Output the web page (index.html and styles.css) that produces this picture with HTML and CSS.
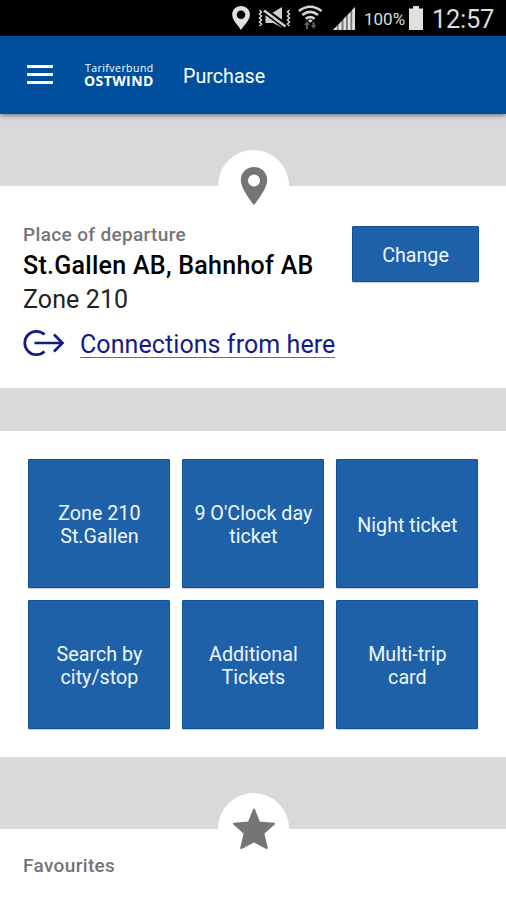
FILE: index.html
```html
<!DOCTYPE html>
<html lang="en">
<head>
<meta charset="utf-8">
<title>Purchase</title>
<link rel="stylesheet" href="styles.css">
</head>
<body>
<div class="status">
  <svg class="status-icons" width="130" height="36" viewBox="226 0 130 36">
    <path fill="#e0e0e0" fill-rule="evenodd" d="M241 6C235.800 6 232.200 9.700 232.200 14.500C232.200 20.500 238 25 241 30C244 25 249.900 20.500 249.900 14.500C249.900 9.700 246.200 6 241 6ZM241 10.500A4.300 4.300 0 1 1 241 19.100A4.300 4.300 0 1 1 241 10.500Z"/>
    <path fill="#cfcfcf" d="M265.500 12.500H273L282 7V27.500L273 23H265.500z"/>
    <path fill="none" stroke="#000" stroke-width="6" d="M263 9.500L286 26.500"/>
    <g fill="none" stroke="#cfcfcf" stroke-width="1.600">
      <path d="M259.500 10l2 2-2 2 2 2-2 2 2 2-2 2 2 2-2 2M289.500 10l-2 2 2 2-2 2 2 2-2 2 2 2-2 2 2 2"/>
      <path stroke-width="2.600" d="M264 10.500L285.500 26.500"/>
    </g>
    <g fill="none" stroke="#d4d4d4" stroke-width="2.500">
      <path d="M298.800 11Q310.300 2.500 321.500 11M302.300 15Q310.300 8.800 318 15M305.700 18.800Q310.300 15.500 314.600 18.800"/>
    </g>
    <path fill="#d4d4d4" d="M307.800 20.500q2.500-2 5 0l-2.500 2.300z"/>
    <path fill="#606060" d="M304 25l3-4 3 4h-2v4h-2v-4zM311 25h1.500v-3h2v3h2l-3 4z"/>
    <path fill="#777" d="M333 30l22-23v23z"/>
    <path fill="#e0e0e0" d="M333 30l4-4v4zM338.500 24.500l3-3V30h-3zM343.500 19.200l2.500-2.700V30h-2.500zM347.800 14.700l2.700-2.800V30h-2.700zM352.200 10l2.800-3V30h-2.800z"/>
  </svg>
  <span class="percent">100%</span>
  <svg class="battery" width="14" height="24" viewBox="0 0 14 24"><path fill="#e0e0e0" d="M4 0h6v2.500H14V24H0V2.500h4z"/></svg>
  <span class="clock">12:57</span>
</div>
<header class="appbar">
  <div class="menu"><i></i><i></i><i></i></div>
  <div class="logo"><span class="logo-top">Tarifverbund</span><span class="logo-bottom">OSTWIND</span></div>
  <h1><span>Purchase</span></h1>
</header>
<main>
  <section class="departure">
    <div class="badge">
      <svg width="28" height="40" viewBox="0 0 28 40"><path fill="#757575" fill-rule="evenodd" d="M14 0C6.500 0 .8 5.600.8 13C.8 22.500 14 38 14 38S27.200 22.500 27.200 13C27.200 5.600 21.500 0 14 0ZM14 7.500a6 6 0 1 1 0 12a6 6 0 1 1 0-12Z"/></svg>
    </div>
    <div class="place">
      <div class="label"><span class="label-place">Place of departure</span></div>
      <div class="stop"><span>St.Gallen AB, Bahnhof AB</span></div>
      <div class="zone"><span>Zone 210</span></div>
      <div class="connections">
        <svg width="42" height="28" viewBox="0 0 42 28"><path fill="none" stroke="#151a86" stroke-width="2.700" d="M21.500 5.500A11.700 11.700 0 1 0 21.500 22.500M11.500 14H39.500M31 5.500L39.500 14L31 22.500"/></svg>
        <a class="link">Connections from here</a>
      </div>
    </div>
    <button class="change"><span>Change</span></button>
  </section>
  <section class="tickets">
    <button class="tile"><span>Zone 210<br>St.Gallen</span></button>
    <button class="tile"><span>9 O'Clock day<br>ticket</span></button>
    <button class="tile"><span>Night ticket</span></button>
    <button class="tile"><span>Search by<br>city/stop</span></button>
    <button class="tile"><span>Additional<br>Tickets</span></button>
    <button class="tile"><span>Multi-trip<br>card</span></button>
  </section>
  <section class="favourites">
    <div class="badge">
      <svg class="star" width="44" height="42" viewBox="0 0 44 42"><path fill="#757575" stroke="#757575" stroke-width="2" stroke-linejoin="round" d="M22 1.500L27.200 14.500L42 15.700L31.300 25.300L34.800 40L22 33.300L9.200 40L12.700 25.300L2 15.700L16.800 14.500Z"/></svg>
    </div>
    <div class="label"><span class="label-fav">Favourites</span></div>
  </section>
</main>
</body>
</html>
```
FILE: styles.css
```css
* { box-sizing: border-box; }
body { margin: 0; height: 900px; overflow: hidden; background: #d9d9d9; font-family: Roboto, "Liberation Sans", sans-serif; }
span, a { white-space: nowrap; }
.status { height: 36px; background: #000; display: flex; align-items: center; padding-left: 226px; color: #dcdcdc; }
.status-icons { flex: none; }
.percent { width: 40px; margin-left: 8px; font-size: 17px; line-height: 36px; padding-top: 1px; }
.battery { flex: none; margin-left: 5px; }
.clock { margin-left: 9px; font-size: 25.500px; letter-spacing: -.3px; line-height: 36px; padding-top: 2px; }
.appbar { position: relative; height: 78px; background: #004f9f; display: flex; align-items: center; padding-left: 27px; color: #fff; box-shadow: 0 1px 5px rgba(0, 0, 0, .55); }
.menu { width: 26px; display: grid; gap: 5px; margin-top: -1px; }
.menu i { height: 3px; background: #fff; }
.logo { width: 70px; margin-left: 31px; display: grid; font-family: "Open Sans", sans-serif; }
.logo-top { font-size: 10.500px; line-height: 11px; letter-spacing: .45px; padding-left: 1px; }
.logo-bottom { font-size: 14px; line-height: 13px; font-weight: 700; letter-spacing: .4px; }
h1 { margin: 4px 0 0 29px; font-size: 19.700px; line-height: 24px; font-weight: 400; }
.departure { position: relative; height: 202px; margin-top: 72px; background: #fff; display: flex; justify-content: space-between; padding: 36px 27px 0 23px; }
.badge { position: absolute; left: 218px; top: -36px; width: 71px; height: 71px; border-radius: 50%; background: #fff; display: flex; justify-content: center; padding-top: 17px; }
.star { margin-top: -2px; }
.label { font-size: 19px; line-height: 26px; height: 24px; font-weight: 500; letter-spacing: .35px; color: #757575; }
.stop { margin-top: 4px; font-size: 25px; line-height: 32px; font-weight: 500; letter-spacing: .28px; color: #000; }
.zone { margin-top: 1px; font-size: 25px; line-height: 34px; letter-spacing: .1px; color: #222; }
.connections { display: flex; align-items: center; gap: 15px; margin-top: 11px; height: 32px; }
.connections svg { margin-top: -3px; }
.link { font-size: 25px; line-height: 30px; letter-spacing: .08px; color: #151a86; border-bottom: 1px solid #6669a8; height: 28px; }
button { font: inherit; color: #eef6ff; background: #1e61a9; border: 1px solid #105199; border-radius: 1px; padding: 2px 0 0; box-shadow: 0 1px 1px rgba(0, 0, 0, .2); }
.change { width: 127px; height: 56px; margin-top: 4px; font-size: 19.700px; }
.tickets { height: 326px; margin-top: 43px; background: #fff; display: grid; grid-template-columns: repeat(3, 142px); grid-template-rows: 129px 129px; gap: 12px; padding: 28.400px 27.600px 0 28.400px; align-content: start; }
.tile { font-size: 19.700px; line-height: 23.500px; padding-top: 3px; }
.favourites { position: relative; height: 71px; margin-top: 72px; background: #fff; padding: 24px 23px 0; }
```
